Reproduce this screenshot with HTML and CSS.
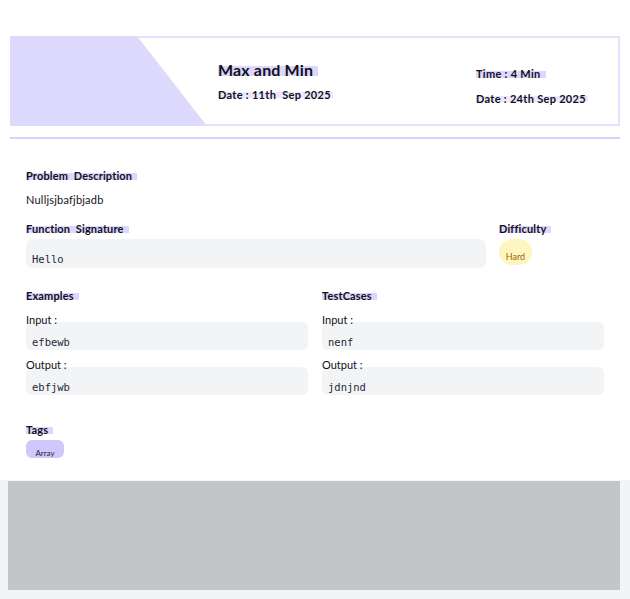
FILE: index.html
```html
<!DOCTYPE html>
<html lang="en">
<head>
<meta charset="utf-8">
<title>Max and Min</title>
<link rel="stylesheet" href="styles.css">
</head>
<body>
<div class="page">
  <header class="header">
    <div class="slant"></div>
    <div class="title-block">
      <h1 class="title"><span class="hl">Max and Min</span></h1>
      <div class="meta"><span class="hl-soft">Date : 11th&nbsp; Sep 2025</span></div>
    </div>
    <div class="side-block">
      <div class="meta"><span class="hl">Time : 4 Min</span></div>
      <div class="meta meta-gap"><span class="hl-soft">Date : 24th Sep 2025</span></div>
    </div>
  </header>
  <div class="divider"></div>

  <main class="content">
    <section class="section-first">
      <h2 class="label"><span class="hl">Problem&nbsp; Description</span></h2>
      <p class="desc">Nulljsjbafjbjadb</p>
    </section>

    <section class="row-sig">
      <div class="sig-col">
        <h2 class="label"><span class="hl">Function&nbsp; Signature</span></h2>
        <div class="code code-sig">Hello</div>
      </div>
      <div class="diff-col">
        <h2 class="label"><span class="hl">Difficulty</span></h2>
        <span class="badge-hard">Hard</span>
      </div>
    </section>

    <section class="row-cases">
      <div class="case-col">
        <h2 class="label"><span class="hl">Examples</span></h2>
        <div class="io-label io-first">Input :</div>
        <div class="code">efbewb</div>
        <div class="io-label">Output :</div>
        <div class="code">ebfjwb</div>
      </div>
      <div class="case-col">
        <h2 class="label"><span class="hl">TestCases</span></h2>
        <div class="io-label io-first">Input :</div>
        <div class="code">nenf</div>
        <div class="io-label">Output :</div>
        <div class="code">jdnjnd</div>
      </div>
    </section>

    <section class="tags">
      <h2 class="label"><span class="hl">Tags</span></h2>
      <span class="tag">Array</span>
    </section>
  </main>
</div>
<div class="scrollbar">
  <div class="scroll-thumb"></div>
</div>
</body>
</html>
```

FILE: styles.css
```css
* { box-sizing: border-box; }

html, body {
  margin: 0;
  padding: 0;
  background: #ffffff;
}

body {
  width: 630px;
  font-family: "Lato", "Inter", sans-serif;
  color: #111118;
}

.page {
  padding: 36px 10px 0 10px;
}

.header {
  display: flex;
  height: 90px;
  border: 2px solid #e4e0fd;
}

.slant {
  width: 197px;
  flex: none;
  margin: -2px 0 -2px -2px;
  background: #dedafe;
  clip-path: polygon(0 0, 127px 0, 100% 100%, 0 100%);
}

.title-block {
  flex: 1;
  padding: 22px 0 0 11px;
}

.title {
  margin: 0;
  font-size: 16px;
  line-height: 20px;
  font-weight: 700;
  letter-spacing: 0.15px;
}

.meta {
  font-size: 11px;
  line-height: 14px;
  font-weight: 700;
  margin-top: 8px;
  letter-spacing: 0.3px;
}

.side-block {
  width: 142px;
  flex: none;
  padding-top: 29px;
}

.side-block .meta { margin-top: 0; }
.side-block .meta-gap { margin-top: 11px; }

.hl {
  background: linear-gradient(transparent 30%, #ddd6fe 30%, #ddd6fe 85%, transparent 85%);
  padding-right: 5px;
}

.hl-soft {
  background: linear-gradient(transparent 30%, #ebe7fe 30%, #ebe7fe 80%, transparent 80%);
  padding-right: 2px;
}

.divider {
  height: 2px;
  margin-top: 11px;
  background: #d7d1fc;
}

.content {
  padding: 0 16px;
}

.label {
  margin: 0;
  font-size: 11px;
  line-height: 14px;
  font-weight: 700;
  letter-spacing: 0.15px;
}

.section-first {
  padding-top: 30px;
}

.desc {
  margin: 10px 0 0;
  font-size: 11px;
  line-height: 14px;
  letter-spacing: 0.2px;
}

.row-sig {
  display: flex;
  gap: 13px;
  margin-top: 15px;
}

.sig-col { width: 460px; flex: none; }
.diff-col { flex: 1; }

.code {
  background: #f3f4f6;
  border-radius: 6px;
  font-family: "DejaVu Sans Mono", "Liberation Mono", monospace;
  font-size: 10.5px;
  line-height: 12px;
  padding: 14px 6px 2px;
  height: 28px;
  color: #1f2937;
}

.code-sig {
  margin-top: 3px;
  height: 29px;
  padding-top: 14px;
}

.badge-hard {
  display: inline-block;
  margin-top: 3px;
  width: 33px;
  height: 26px;
  border-radius: 13px;
  background: #fef6c0;
  color: #a16207;
  font-size: 9px;
  line-height: 10px;
  padding-top: 13px;
  text-align: center;
}

.row-cases {
  display: flex;
  gap: 14px;
  margin-top: 21px;
}

.case-col { flex: 1; }

.io-label {
  font-size: 11px;
  line-height: 14px;
  margin-top: 8px;
  margin-bottom: -5px;
}

.io-label.io-first { margin-top: 10px; }

.tags {
  margin-top: 28px;
  padding-bottom: 22px;
}

.tag {
  display: block;
  width: 38px;
  height: 18px;
  margin-top: 3px;
  border-radius: 6px;
  background: #cfc8fb;
  font-size: 8px;
  line-height: 9px;
  padding-top: 9px;
  text-align: center;
  color: #1f1f2e;
}

.scrollbar {
  height: 119px;
  background: #f3f4f6;
  padding: 1px 10px 9px 8px;
}

.scroll-thumb {
  height: 100%;
  background: #c4c5c7;
}
```
